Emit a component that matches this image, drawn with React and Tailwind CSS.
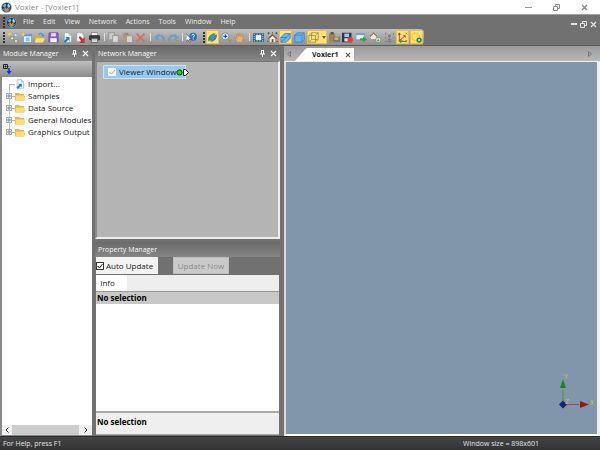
const I = {
  logo: (
    <>
      <circle cx="7" cy="7" r="6.2" fill="#163a5c" />
      <path d="M2 5l3-3 2 2-2 3z" fill="#6db3e8" />
      <path d="M9 2l3 3-2 3-2-3z" fill="#a9d2f2" />
      <path d="M5 6l2.200 3 2.500-3.500v3L7 12 4 8z" fill="#f08a24" />
      <path d="M3 9l4 3.500L11 9" stroke="#dfe9f2" strokeWidth="1" fill="none" />
      <circle cx="7" cy="7" r="6.300" stroke="#8aa6bb" strokeWidth=".8" fill="none" />
    </>
  ),
  nodes: (
    <>
      <path d="M3 4l4 4M7 8l4-4M7 8l4 4M7 8H3" stroke="#6a6f70" strokeWidth="1" />
      <circle cx="11" cy="4" r="2" fill="#dfe6df" stroke="#7c8583" strokeWidth=".7" />
      <circle cx="6.500" cy="8" r="2" fill="#dfe6df" stroke="#7c8583" strokeWidth=".7" />
      <circle cx="11.500" cy="11.500" r="2" fill="#dfe6df" stroke="#7c8583" strokeWidth=".7" />
      <path d="M3 0l1 2 2 1-2 1-1 2-1-2-2-1 2-1z" fill="#f7d040" />
    </>
  ),
  newwin: (
    <>
      <rect x="3" y="3" width="10.500" height="10.500" fill="#e8f3fb" stroke="#5f9fce" />
      <rect x="3" y="3" width="10.500" height="2.500" fill="#4f9fdc" />
      <path d="M6 7h5v5H6z" fill="#8fc3ea" />
      <path d="M3 0l1 2 2 1-2 1-1 2-1-2-2-1 2-1z" fill="#f7c840" />
    </>
  ),
  open: (
    <>
      <path d="M1 5h4l1 1h5v7H1z" fill="#e3a92f" />
      <path d="M3 8h11l-2.500 5.500H1z" fill="#ffdc7c" />
      <path d="M6 4c1-3 4-3 5 0" stroke="#4c8fcf" strokeWidth="1.500" fill="none" />
      <path d="M9 3.500h5l-2.500 3z" fill="#4c8fcf" />
    </>
  ),
  save: (
    <>
      <rect x="1" y="1" width="12" height="12" rx="1" fill="#8b62c4" stroke="#7450ae" />
      <rect x="4" y="1.500" width="6" height="4" fill="#e9e0f7" />
      <rect x="3" y="8" width="8" height="5" fill="#fff" />
    </>
  ),
  importDoc: (
    <>
      <path d="M3 1h6l3 3v9H3z" fill="#f6fafd" stroke="#7ba0bf" strokeWidth=".8" />
      <path d="M9 1v3h3" fill="#cfe0ee" stroke="#7ba0bf" strokeWidth=".8" />
      <path d="M2 12l4-4-2-1.500h5.500V12L8 10l-4 4z" fill="#1c7fc4" />
    </>
  ),
  exportDoc: (
    <>
      <path d="M1 1h6l3 3v8H1z" fill="#f6f8fa" stroke="#8f9ca8" strokeWidth=".8" />
      <path d="M5 5l4 4 2-2.500v7.500H4.500l2-2.500L3.500 7z" fill="#e02525" />
    </>
  ),
  print: (
    <>
      <rect x="3" y="1" width="8" height="4" fill="#f4f4f4" stroke="#555" strokeWidth=".6" />
      <rect x="0" y="4" width="14" height="6.500" rx="1.500" fill="#35383c" />
      <rect x="3" y="8" width="8" height="5" fill="#dfe6ec" stroke="#333" strokeWidth=".7" />
      <path d="M4 10h6" stroke="#888" strokeWidth=".7" />
    </>
  ),
  copy: (
    <>
      <rect x="1" y="1" width="7" height="9" fill="#cacaca" stroke="#929292" />
      <rect x="6" y="4.500" width="7" height="8.500" fill="#d8d8d8" stroke="#929292" />
    </>
  ),
  paste: (
    <>
      <rect x="1" y="2" width="9" height="11" rx="1" fill="#b09a7a" />
      <rect x="3.500" y="1" width="4" height="2.500" fill="#858585" />
      <rect x="6" y="5" width="7" height="8" fill="#d6d5d0" stroke="#969696" strokeWidth=".8" />
    </>
  ),
  del: <path d="M2 2l10 10.500M12 2L2 12.500" stroke="#dd6a60" strokeWidth="2.400" />,
  undo: (
    <>
      <path d="M3 6.500c4-4 10-2 9.500 5" stroke="#6a9fcc" strokeWidth="2.400" fill="none" />
      <path d="M0 7l5.500-5v9z" fill="#6a9fcc" />
    </>
  ),
  redo: (
    <>
      <path d="M11 6.500C7 2.500 1 4.500 1.500 11.500" stroke="#6a9fcc" strokeWidth="2.400" fill="none" />
      <path d="M14 7L8.500 2v9z" fill="#6a9fcc" />
    </>
  ),
  help: (
    <>
      <circle cx="9" cy="6" r="5" fill="#2e74b8" />
      <path d="M7.500 4.500c0-2 3.200-2 3.200 0 0 1.300-1.600 1.200-1.600 2.700M9.100 8.300v1.200" stroke="#fff" strokeWidth="1.200" fill="none" />
      <path d="M0 2v10l2.500-2 1.500 3 1.500-.8-1.500-3h3z" fill="#fff" stroke="#223" strokeWidth=".7" />
    </>
  ),
  rotate: (
    <>
      <path d="M3 6l5-4 4 2-1 5-5 3-4-2z" fill="#3f8fd0" />
      <path d="M2 12C-1 7 7 0 12 2c-5 0-9 4-8 8z" fill="#3a9a45" />
      <path d="M12 3c2 5-4 11-9 9 5 0 8-4 8-8z" fill="#2f8450" />
    </>
  ),
  zoom: (
    <>
      <circle cx="5.500" cy="5.500" r="4.500" fill="#dcefff" stroke="#5c7fa6" strokeWidth="1" />
      <path d="M3 5.500h5M5.500 3v5" stroke="#2456a8" strokeWidth="1.500" />
      <path d="M9 9l4 4" stroke="#c08030" strokeWidth="2.200" />
    </>
  ),
  hand: (
    <path d="M4 13L1 8c-.5-1.300 1-1.500 1.500-.7L4 8.500 3 3.500c0-1.200 1.400-1.200 1.700 0L5.500 6V2c.2-1.200 1.500-1.200 1.700 0l.3 4L9 2.500c.5-1 1.700-.6 1.500.5L10 7l1.500-2.500c.8-.8 1.700 0 1.300.8L11 10v3z" fill="#e9b277" stroke="#b07c44" strokeWidth=".7" />
  ),
  fit: (
    <>
      <rect x="0" y="1.500" width="14" height="11" fill="#21608f" />
      <rect x="3.500" y="4" width="7" height="6" fill="#fff" />
      <path d="M1 2.800h12M1 11.200h12" stroke="#fff" strokeDasharray="1.500 2" />
      <path d="M1.500 5v4M12.500 5v4" stroke="#fff" strokeDasharray="1.500 1" />
    </>
  ),
  home: (
    <>
      <path d="M3.500 8L7 4.500 10.500 8v5h-7z" fill="#f5f2ea" stroke="#8d7a68" strokeWidth=".5" />
      <path d="M1.500 8.500L7 3.500l5.500 5" stroke="#8d4a35" strokeWidth="1.300" fill="none" />
      <rect x="6" y="9" width="2.200" height="4" fill="#6b5138" />
      <path d="M2 0v3M.5 1.500h3M12 0v3M10.500 1.500h3M7 0v2M0 12h2M12 12h2" stroke="#444" strokeWidth=".9" />
    </>
  ),
  persp: (
    <>
      <path d="M1 7l5-5h7v6l-5 5H1z" fill="#69b8f0" stroke="#2377b8" strokeWidth=".9" />
      <path d="M1 13l7-6 5-5M1 7h7" fill="none" stroke="#2377b8" strokeWidth=".9" />
    </>
  ),
  cube: (
    <>
      <path d="M1 4l3-3h9v9l-3 3H1z" fill="#63b3ec" stroke="#2377b8" strokeWidth=".8" />
      <path d="M1 4h9v9M10 4l3-3" fill="none" stroke="#2f82c2" strokeWidth=".8" />
    </>
  ),
  wire: (
    <path d="M1 4.500L4.500 1H13v8.500L9.500 13H1zM1 4.500h8.500V13M9.500 4.500L13 1M4.500 1v8.500H13M4.500 9.500L1 13" fill="none" stroke="#8a9648" strokeWidth="1" />
  ),
  clip: (
    <>
      <rect x="0" y="2" width="8" height="11" fill="#a8834e" />
      <rect x="2" y="0" width="4" height="3" fill="#555" />
      <rect x="5" y="6" width="9" height="7" fill="#6f7b86" />
      <rect x="7" y="7" width="5" height="3" fill="#e3b84e" />
    </>
  ),
  record: (
    <>
      <rect x="0" y="1" width="12" height="12" fill="#24384f" />
      <rect x="3" y="2" width="6" height="4.500" fill="#a6c8e6" />
      <rect x="3" y="8" width="6" height="4" fill="#dbe4ec" />
      <circle cx="10.500" cy="10" r="3.500" fill="#f03a34" />
    </>
  ),
  winArrow: (
    <>
      <rect x="0" y="2" width="11" height="8" fill="#e7f1f8" stroke="#5f87a5" strokeWidth=".8" />
      <rect x="0" y="2" width="11" height="2" fill="#6fa5cc" />
      <path d="M5 8h4V5.500L14 9.500 9 13v-2.500H5z" fill="#3f9a48" />
    </>
  ),
  houseGo: (
    <>
      <path d="M1 5.500l3.500-3 3.500 3V9H1z" fill="#efe7da" />
      <path d="M0 5.500L4.500 1.500 9 5.500" stroke="#8d4a35" strokeWidth="1.200" fill="none" />
      <circle cx="10.500" cy="10" r="3.300" fill="#f0f4ee" stroke="#567d4e" strokeWidth=".8" />
      <path d="M10.500 8v3.500M9 10l1.500 1.800L12 10" stroke="#2d7c33" strokeWidth=".9" fill="none" />
    </>
  ),
  target: (
    <>
      <circle cx="7" cy="5" r="1.800" fill="#7c7c7c" />
      <path d="M7 6v3M5 13l.5-4h3L9 13z" fill="#8a8a8a" stroke="#7c7c7c" strokeWidth=".8" />
      <path d="M2 1v2.500M12 1v2.500M1 7.500h2M11 7.500h2M1 12h2M11.500 12h2" stroke="#747474" strokeWidth="1" />
    </>
  ),
  axes: (
    <>
      <path d="M3 2v10h9" stroke="#8c5a14" fill="none" strokeWidth="1.200" />
      <path d="M3 11l7-6" stroke="#c03722" strokeWidth="1.200" />
      <path d="M1 3.500l2-3 2 3z" fill="#8c3a14" />
      <path d="M5 9v5M2 11.500h6" stroke="#2f8f3c" strokeWidth="1.200" />
      <path d="M7.500 4h3.500v3.500z" fill="#c03722" />
      <path d="M11 1l2 2M13 1l-2 2M11 10l2 3M13 10l-2 3" stroke="#7a5a20" strokeWidth=".7" />
    </>
  ),
  light: (
    <>
      <circle cx="6" cy="6" r="5" fill="#ffe264" stroke="#eab93a" />
      <circle cx="10.300" cy="10.300" r="3.400" fill="#2f8247" />
      <circle cx="10.300" cy="10.300" r="1.300" fill="#e6f5e2" />
    </>
  ),
};

function Icon({ name, className = "size-[11px]" }) {
  return (
    <svg viewBox="0 0 14 14" className={className} aria-hidden="true">
      {I[name]}
    </svg>
  );
}

function Grip() {
  return (
    <span className="flex w-[3px] shrink-0 flex-col items-center gap-px">
      {[0, 1, 2, 3].map((i) => (
        <i key={i} className="size-[2px] bg-[#333]" />
      ))}
    </span>
  );
}

const Sep = () => (
  <span className="flex w-1 shrink-0 justify-center">
    <i className="h-2 w-px bg-[#dedede]" />
  </span>
);

function Tool({ name, label, on, menu }) {
  const base = "flex h-[14px] shrink-0 items-center justify-center ";
  return (
    <button
      aria-label={label}
      className={base + (menu ? "w-5 gap-[3px] " : "w-[13px] ") + (on ? "border border-[#e8bd55] bg-[#ffe07a]" : "")}
    >
      <Icon name={name} className="size-[11px] shrink-0" />
      {menu && (
        <svg viewBox="0 0 4 3" className="h-[3px] w-1 shrink-0" aria-hidden="true">
          <path d="M0 0h4L2 3z" fill="#6b5a2a" />
        </svg>
      )}
    </button>
  );
}

function Pin() {
  return (
    <svg viewBox="0 0 7 7" className="size-[7px]" fill="none" stroke="#fff" aria-hidden="true">
      <path d="M2 .5h3M2.500 0v4M4.500 0v4M1 4h5M3.500 4v3" />
    </svg>
  );
}

function Cross({ className = "size-[7px] text-white" }) {
  return (
    <svg viewBox="0 0 7 7" className={className} fill="none" stroke="currentColor" strokeWidth="1.200" aria-hidden="true">
      <path d="M1 1l5 5M6 1L1 6" />
    </svg>
  );
}

function PanelHeader({ title, controls = true }) {
  return (
    <header className="flex h-[15px] shrink-0 items-center bg-linear-to-b from-[#6a6a6a] to-[#868686] pr-[3px] pl-[3px] text-[7px] text-[#f8f8f8]">
      <h2 className="flex-1 whitespace-nowrap">{title}</h2>
      {controls && (
        <div className="flex gap-1">
          <button aria-label="Auto hide"><Pin /></button>
          <button aria-label="Close"><Cross /></button>
        </div>
      )}
    </header>
  );
}

function Folder() {
  return (
    <svg viewBox="0 0 10 9" className="h-[9px] w-2.5 shrink-0" aria-hidden="true">
      <path d="M0 1h4l1 1h4v6.500H0z" fill="#e8b44a" />
      <path d="M1 3.500h9v5H.500z" fill="#ffdb7d" />
    </svg>
  );
}

function Restore({ className }) {
  return (
    <svg viewBox="0 0 7 7" className={className} fill="none" stroke="currentColor" aria-hidden="true">
      <path d="M.5 2.500h4v4h-4zM2.500 2V.5h4v4H5" />
    </svg>
  );
}

const tools1 = [
  ["nodes", "Network"], ["newwin", "New"], ["open", "Open"], ["save", "Save"], ["importDoc", "Import"], ["exportDoc", "Export"], ["print", "Print"], null,
  ["copy", "Copy"], ["paste", "Paste"], ["del", "Delete"], null,
  ["undo", "Undo"], ["redo", "Redo"], null, ["help", "Help"],
];
const tools2 = [
  ["rotate", "Rotate", true], ["zoom", "Zoom"], ["hand", "Pan"], null,
  ["fit", "Fit"], ["home", "Home"], ["persp", "Perspective", true], ["cube", "Orthographic"], ["wire", "Box", true, true],
  ["clip", "Copy view"], ["record", "Record"], ["winArrow", "Send"], ["houseGo", "Set home"], ["target", "View"], ["axes", "Axes", true], ["light", "Light", true],
];
const menus = ["File", "Edit", "View", "Network", "Actions", "Tools", "Window", "Help"];
const folders = ["Samples", "Data Source", "General Modules", "Graphics Output"];

function ToolGroup({ items, className }) {
  return (
    <div role="toolbar" className={"flex items-center justify-between pl-[2px] " + className}>
      <Grip />
      {items.map((t, i) => (t ? <Tool key={i} name={t[0]} label={t[1]} on={t[2]} menu={t[3]} /> : <Sep key={i} />))}
    </div>
  );
}

export default function App() {
  return (
    <div className="flex h-screen flex-col overflow-hidden bg-[#717171] font-['Open_Sans','Noto_Sans',sans-serif] text-[8px] leading-3 text-[#1a1a1a]">
      <div className="flex h-[14px] shrink-0 items-center gap-[3px] bg-white pl-px text-[#8b8b8b]">
        <Icon name="logo" className="size-[11px]" />
        <h1 className="flex-1">Voxler - [Voxler1]</h1>
        <div className="flex items-center gap-[21px] pr-3">
          <button aria-label="Minimize" className="h-px w-[7px] bg-[#999]" />
          <button aria-label="Restore"><Restore className="size-[7px]" /></button>
          <button aria-label="Close"><Cross className="size-[7px] text-[#888]" /></button>
        </div>
      </div>

      <nav className="flex h-[15px] shrink-0 items-center border-t border-[#a0a0a0] pr-[3px] pl-[2px] text-[7px] text-[#ececec]">
        <Grip />
        <Icon name="logo" className="ml-px size-[11px]" />
        <div className="ml-[6px] flex flex-1 gap-[9px]">
          {menus.map((m) => (
            <button key={m}>{m}</button>
          ))}
        </div>
        <div className="flex items-center gap-[3px] pt-1 text-[#e4e4e4]">
          <button aria-label="Minimize document" className="h-[2px] w-[6px] bg-[#e4e4e4]" />
          <button aria-label="Restore document"><Restore className="size-[7px]" /></button>
          <button aria-label="Close document"><Cross className="size-[7px]" /></button>
        </div>
      </nav>

      <div className="flex h-4 shrink-0">
        <div className="flex rounded-r-sm bg-linear-to-b from-[#c0c0c0] to-[#909090]">
          <ToolGroup items={tools1} className="w-[198px]" />
          <ToolGroup items={tools2} className="ml-[2px] w-[224px] pr-px" />
        </div>
      </div>

      <main className="flex min-h-0 flex-1 border-t border-[#5c5c5c]">
        <section className="flex w-[92px] shrink-0 flex-col">
          <PanelHeader title="Module Manager" />
          <div className="flex h-4 shrink-0 bg-linear-to-b from-[#c0c0c0] to-[#8c8c8c] pl-[3px]">
            <button aria-label="Add module">
              <svg viewBox="0 0 9 12" className="h-3 w-[9px]" fill="none" aria-hidden="true">
                <path d="M.5 1.500h4v4h-4zM2.500 2.500v2M1.500 3.500h2" stroke="#222" />
                <path d="M5 3.500h4" stroke="#666" strokeDasharray="1 1" />
                <path d="M6 5v3" stroke="#1030e0" strokeWidth="1.500" />
                <path d="M3.500 8h5L6 11.500z" fill="#1030e0" />
              </svg>
            </button>
          </div>
          <div className="flex min-h-0 flex-1 flex-col border-b border-l-2 border-[#8a8a8a] bg-white">
            <ul className="flex-1 overflow-hidden pt-px">
              <li className="flex h-[12px] items-center pl-[7px] whitespace-nowrap">
                <i className="h-[6px] w-[6px] self-end border-t border-l border-[#b5b5b5]" />
                <Icon name="importDoc" className="size-[10px] shrink-0" />
                <span className="ml-[3px]">Import...</span>
              </li>
              {folders.map((f, i) => (
                <li key={f} className="flex h-[12px] items-center pl-1 whitespace-nowrap">
                  <span className="flex h-full flex-col items-center">
                    <i className="w-px flex-1 bg-[#c4c4c4]" />
                    <button aria-label={"Expand " + f} className="flex size-[6px] items-center justify-center border border-[#aaa] bg-white">
                      <svg viewBox="0 0 4 4" className="size-1" stroke="#3c5a8a" strokeWidth=".7" aria-hidden="true"><path d="M0 2h4M2 0v4" /></svg>
                    </button>
                    <i className={i < folders.length - 1 ? "w-px flex-1 bg-[#c4c4c4]" : "w-px flex-1"} />
                  </span>
                  <i className="h-px w-[3px] bg-[#b5b5b5]" />
                  <Folder />
                  <span className="ml-[3px]">{f}</span>
                </li>
              ))}
            </ul>
            <div className="flex h-[10px] shrink-0 items-center bg-[#f0f0f0] text-[#333]">
              <button aria-label="Scroll left" className="flex w-[10px] justify-center"><svg viewBox="0 0 4 6" className="h-[6px] w-1" fill="none" stroke="currentColor"><path d="M3.500.5L1 3l2.500 2.500" /></svg></button>
              <i className="h-full w-[67px] bg-[#cdcdcd]" />
              <button aria-label="Scroll right" className="flex flex-1 justify-center"><svg viewBox="0 0 4 6" className="h-[6px] w-1" fill="none" stroke="currentColor"><path d="M.5.5L3 3 .5 5.500" /></svg></button>
            </div>
          </div>
        </section>

        <section className="ml-[3px] flex w-[185px] shrink-0 flex-col">
          <PanelHeader title="Network Manager" />
          <div className="flex-[172] border-t border-r-2 border-b-2 border-l-2 border-t-[#777] border-r-[#eee] border-b-[#eee] border-l-[#8a8a8a] bg-[#b4b4b4] pt-[3px] pl-[6px]">
            <div className="flex items-center">
              <label className="flex h-[14px] w-[83px] items-center gap-[3px] border border-[#c8e4f8] bg-[#99c9ef] pl-1 whitespace-nowrap">
                <input type="checkbox" defaultChecked className="peer sr-only" />
                <span className="flex size-2 shrink-0 items-center justify-center bg-[#f4f4f4]">
                  <svg viewBox="0 0 8 8" className="size-2" fill="none" stroke="#aaa" aria-hidden="true"><path d="M1.500 4l2 2L7 2" /></svg>
                </span>
                Viewer Window
              </label>
              <svg viewBox="0 0 13 7" className="-ml-[10px] h-[7px] w-[13px] shrink-0" aria-hidden="true">
                <circle cx="3.500" cy="3.500" r="2.600" fill="#18d818" stroke="#0c380c" />
                <path d="M7.500 .5h2l3 3-3 3h-2z" fill="#fff" stroke="#222" />
              </svg>
            </div>
          </div>
          <div className="mt-[3px]"><PanelHeader title="Property Manager" controls={false} /></div>
          <div className="flex h-[18px] shrink-0 gap-[15px] pb-px pl-px">
            <label className="flex w-[62px] items-center gap-[2px] bg-[#f2f2f2] whitespace-nowrap">
              <input type="checkbox" defaultChecked className="sr-only" />
              <span className="flex size-2 shrink-0 items-center justify-center border border-[#333] bg-white">
                <svg viewBox="0 0 6 6" className="size-[6px]" fill="none" stroke="#222" aria-hidden="true"><path d="M.5 3l2 2L5.500 1" /></svg>
              </span>
              Auto Update
            </label>
            <button disabled className="w-14 border border-[#bcbcbc] bg-[#cacaca] whitespace-nowrap text-[#8c8c8c]">Update Now</button>
          </div>
          <div role="tablist" className="mr-px ml-px flex h-4 shrink-0 bg-[#eee]">
            <button role="tab" className="w-[31px] bg-white pr-2">Info</button>
          </div>
          <div className="mr-px ml-px h-[13px] shrink-0 border-t border-[#999] bg-[#c8c8c8] pl-px font-bold text-black">No selection</div>
          <div className="mr-px ml-px flex-[107] bg-white" />
          <div className="mr-px mb-px ml-px h-[24px] shrink-0 border-t-2 border-b border-[#aaa] bg-[#efefef] pt-[3px] pl-px font-bold text-black">No selection</div>
        </section>

        <section className="ml-1 flex min-w-0 flex-1 flex-col">
          <div className="flex h-[15px] shrink-0 items-end bg-linear-to-b from-[#9a9a9a] to-[#b8b8b8]">
            <button aria-label="Previous tab" className="w-[11px] self-center pl-[3px]"><svg viewBox="0 0 4 6" className="h-[6px] w-1" fill="none" stroke="#777"><path d="M3.500.5v5L.5 3z" /></svg></button>
            <svg viewBox="0 0 12 13" className="h-[13px] w-3" aria-hidden="true"><path d="M0 13L10 1.500 12 0v13z" fill="#fff" /></svg>
            <div className="flex h-[13px] w-[47px] items-center justify-between bg-white pr-[3px] pl-[5px]">
              <button className="text-[7px] font-bold">Voxler1</button>
              <button aria-label="Close tab"><Cross className="size-[6px] text-[#555]" /></button>
            </div>
            <button aria-label="Next tab" className="ml-auto self-center pr-2"><svg viewBox="0 0 4 6" className="h-[6px] w-1" fill="none" stroke="#777"><path d="M.5.5v5L3.500 3z" /></svg></button>
          </div>
          <div className="flex flex-1 items-end justify-end border-t border-r-[3px] border-b-2 border-l-2 border-t-[#eee] border-r-[#eee] border-b-white border-l-[#ddd] bg-[#8196aa]">
            <svg viewBox="0 -8 38 46" className="mb-[22px] h-[46px] w-[38px]" aria-hidden="true">
              <path d="M4 30V16" stroke="#3b9a3f" /><path d="M1 14L4 5l3 9z" fill="#1f8424" />
              <path d="M4 30.500h16" stroke="#a04848" /><path d="M21 27l9 3.500-9 3.500z" fill="#8c1c1c" />
              <path d="M0 30.500l4-4 4 4-4 4z" fill="#1b1f80" />
              <g fill="#c8c83c" fontSize="7"><text x="5" y="5">Y</text><text x="31" y="31">X</text><text x="6" y="30">Z</text></g>
            </svg>
          </div>
        </section>
      </main>

      <footer className="flex h-[14px] shrink-0 items-center border-t border-[#2b2b2b] bg-linear-to-b from-[#454545] to-[#333] pl-[3px] text-[7px] text-[#e2e2e2]">
        <span className="flex-1">For Help, press F1</span>
        <span className="w-[137px]">Window size = 898x601</span>
      </footer>
    </div>
  );
}
